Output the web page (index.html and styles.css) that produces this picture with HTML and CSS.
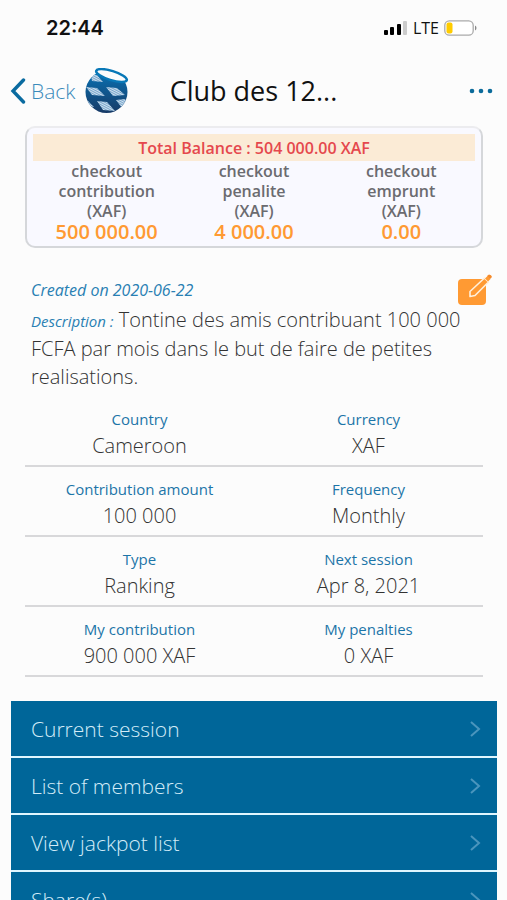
FILE: index.html
```html
<!DOCTYPE html>
<html lang="en">
<head>
<meta charset="utf-8">
<meta name="viewport" content="width=device-width, initial-scale=1">
<title>Club des 12</title>
<link rel="stylesheet" href="styles.css">
</head>
<body>
<div class="status">
  <span class="time">22:44</span>
  <div class="indicators">
    <svg width="24" height="16" viewBox="0 0 24 16" aria-hidden="true">
      <rect x="0" y="10" width="4" height="5" rx="1"/>
      <rect x="6" y="7" width="4" height="8" rx="1"/>
      <rect x="13" y="4" width="4" height="11" rx="1"/>
      <rect x="19" y="1" width="4" height="14" rx="1" fill="#ccc"/>
    </svg>
    <span class="network">LTE</span>
    <svg width="33" height="16" viewBox="0 0 33 16" aria-hidden="true">
      <rect x="0.8" y="0.8" width="28.4" height="14.4" rx="4.5" fill="#fff" stroke="#aaa" stroke-width="1.3"/>
      <rect x="2.5" y="2.5" width="6" height="11" rx="2" fill="#fc0"/>
      <path d="M31 5.5q1.5 .8 1.5 2.5t-1.5 2.5z" fill="#888"/>
    </svg>
  </div>
</div>
<header class="topbar">
  <a class="back" href="#">
    <svg width="16" height="26" viewBox="0 0 16 26" aria-hidden="true"><path d="M13.5 2 3 13l10.500 11" fill="none" stroke="#0a6ba0" stroke-width="3.400" stroke-linecap="round"/></svg>
    <span>Back</span>
  </a>
  <svg class="logo" width="46" height="46" viewBox="0 0 46 46" aria-hidden="true">
    <defs>
      <linearGradient id="globe" x1="0" y1="0" x2="0" y2="1"><stop offset="0" stop-color="#0873b5"/><stop offset="1" stop-color="#173a66"/></linearGradient>
      <pattern id="weave" width="2" height="2" patternUnits="userSpaceOnUse" patternTransform="rotate(28)"><rect width="2" height="2" fill="#cfe0ef"/><path d="M0 .4h2" stroke="#4383b5" stroke-width=".7"/></pattern>
      <clipPath id="disc"><circle cx="22.500" cy="24" r="21"/></clipPath>
    </defs>
    <circle cx="22.500" cy="24" r="21" fill="url(#globe)"/>
    <g clip-path="url(#disc)" fill="url(#weave)">
      <path d="M7 7l6 0 6 7-11-1z"/>
      <path d="M2 19l11 1 8 8-13-1z"/>
      <path d="M22 19l11 1 8 7-12 1z"/>
      <path d="M13 33l10 1 8 9-12-1z"/>
      <path d="M32 32l9-1 4 7-7 2z"/>
      <path d="M-1 31l5 2 6 6-7-1z"/>
    </g>
    <path d="M11 0H44V12L28 8 12 4z" fill="#fcfcfc"/>
    <ellipse cx="27.500" cy="7.500" rx="16" ry="4.600" transform="rotate(17 27.500 7.500)" fill="#fcfcfc" stroke="#0878b7" stroke-width="2.500"/>
  </svg>
  <h1>Club des 12...</h1>
  <button class="more" type="button" aria-label="More options">
    <svg width="24" height="6" viewBox="0 0 24 6" fill="#0b6b9b" aria-hidden="true"><circle cx="3" cy="3" r="2.300"/><circle cx="12" cy="3" r="2.300"/><circle cx="21" cy="3" r="2.300"/></svg>
  </button>
</header>
<main>
  <section class="balance">
    <h2>Total Balance : 504 000.00 XAF</h2>
    <div class="accounts">
      <div><p>checkout<br>contribution<br>(XAF)</p><strong>500 000.00</strong></div>
      <div><p>checkout<br>penalite<br>(XAF)</p><strong>4 000.00</strong></div>
      <div><p>checkout<br>emprunt<br>(XAF)</p><strong>0.00</strong></div>
    </div>
  </section>
  <section class="about">
    <div class="created">
      <em>Created on 2020-06-22</em>
      <button class="edit" type="button" aria-label="Edit">
        <svg width="34" height="32" viewBox="0 0 34 32" aria-hidden="true">
          <rect x="0" y="5" width="28" height="26" rx="4" fill="#ff9a33"/>
          <path d="M12 17.500 26.500 4l4 4L17 21.500l-5 1z" fill="#ff9a33" stroke="#fff0dc" stroke-width="1.600" stroke-linejoin="round"/>
          <path d="M27 4.500 29.500 2l3 3L30 7.500z" fill="#ff9a33"/>
          <path d="M31 .5q2.500 0 3 2.500l-2 2-3-3z" fill="#f58a2a"/>
        </svg>
      </button>
    </div>
    <p class="description"><em>Description :</em> Tontine des amis contribuant 100 000 FCFA par mois dans le but de faire de petites realisations.</p>
  </section>
  <dl class="facts">
    <div><dt>Country</dt><dd>Cameroon</dd></div>
    <div><dt>Currency</dt><dd>XAF</dd></div>
    <div><dt>Contribution amount</dt><dd>100 000</dd></div>
    <div><dt>Frequency</dt><dd>Monthly</dd></div>
    <div><dt>Type</dt><dd>Ranking</dd></div>
    <div><dt>Next session</dt><dd>Apr 8, 2021</dd></div>
    <div><dt>My contribution</dt><dd>900 000 XAF</dd></div>
    <div><dt>My penalties</dt><dd>0 XAF</dd></div>
  </dl>
  <nav class="menu">
    <a href="#">Current session <svg width="12" height="18" viewBox="0 0 12 18" aria-hidden="true"><path d="m2 2 8 7-8 7"/></svg></a>
    <a href="#">List of members <svg width="12" height="18" viewBox="0 0 12 18" aria-hidden="true"><path d="m2 2 8 7-8 7"/></svg></a>
    <a href="#">View jackpot list <svg width="12" height="18" viewBox="0 0 12 18" aria-hidden="true"><path d="m2 2 8 7-8 7"/></svg></a>
    <a href="#">Share(s) <svg width="12" height="18" viewBox="0 0 12 18" aria-hidden="true"><path d="m2 2 8 7-8 7"/></svg></a>
  </nav>
</main>
</body>
</html>
```
FILE: styles.css
```css
* {
  box-sizing: border-box;
}

body {
  margin: 0;
  height: 100vh;
  display: flex;
  flex-direction: column;
  overflow: hidden;
  background: #fcfcfc;
  color: #333;
  font-family: "Open Sans", sans-serif;
}

h1, h2, p, dl, dd {
  margin: 0;
}

a {
  text-decoration: none;
}

button {
  border: 0;
  padding: 0;
  background: none;
  display: flex;
}

.status {
  display: flex;
  justify-content: space-between;
  align-items: center;
  height: 56px;
  padding: 0 30px 0 46px;
  flex: none;
  color: #111;
}

.time {
  font-family: Inter, sans-serif;
  font-size: 20px;
  font-weight: 600;
}

.indicators {
  display: flex;
  align-items: center;
  gap: 5px;
}

.network {
  font-size: 16px;
  font-weight: 500;
}

.topbar {
  display: grid;
  grid-template-columns: 1fr auto 1fr;
  grid-template-areas: "left title right";
  align-items: center;
  height: 70px;
  padding: 0 10px;
  flex: none;
}

.back {
  grid-area: left;
  display: flex;
  align-items: center;
  gap: 5px;
  color: #3a8bbb;
  font-size: 21px;
  font-weight: 300;
}

.logo {
  grid-area: left;
  margin-left: 74px;
}

h1 {
  grid-area: title;
  color: #111;
  font-size: 27px;
  font-weight: 400;
  line-height: 36px;
}

.more {
  grid-area: right;
  justify-self: end;
  padding-right: 4px;
}

main {
  flex: 1;
  min-height: 0;
  overflow-y: auto;
  scrollbar-width: none;
}

.balance {
  margin: 0 24px 0 25px;
  padding: 6px 6px 4px;
  border: 2px solid #d5d7da;
  border-top-color: #ececef;
  border-radius: 10px;
  background: #f9f9ff;
  text-align: center;
}

.balance h2 {
  padding-top: 2px;
  background: #fbebd6;
  color: #e5484d;
  font-size: 16px;
  font-weight: 600;
  line-height: 25px;
}

.accounts {
  display: grid;
  grid-template-columns: repeat(3, 1fr);
}

.accounts p {
  color: #6b6b70;
  font-size: 16px;
  font-weight: 600;
  line-height: 20px;
}

.accounts strong {
  display: block;
  color: #ff9a33;
  font-size: 20px;
  font-weight: 600;
  line-height: 21px;
}

.about {
  padding: 26px 15px 0 31px;
}

.created {
  display: flex;
  justify-content: space-between;
  align-items: center;
}

.about em {
  color: #2980b3;
  font-size: 15px;
}

.created em {
  font-size: 16px;
}

.description {
  margin-right: 24px;
  font-size: 20px;
  font-weight: 300;
  line-height: 28px;
}

.description em {
  font-weight: 400;
}

.facts {
  display: grid;
  grid-template-columns: 1fr 1fr;
  margin: 6px 24px 0 25px;
  text-align: center;
}

.facts div {
  height: 70px;
  padding-top: 10px;
  border-bottom: 2px solid #d8d8da;
}

.facts dt {
  color: #1c75a8;
  font-size: 15px;
  line-height: 24px;
}

.facts dd {
  font-size: 20px;
  font-weight: 300;
  line-height: 30px;
}

.menu {
  display: grid;
  gap: 2px;
  margin: 24px 10px 0 11px;
  background: #dff6ff;
}

.menu a {
  display: flex;
  align-items: center;
  justify-content: space-between;
  height: 55px;
  padding: 0 16px 0 20px;
  background: #006699;
  color: #d3ecf8;
  font-size: 21px;
  font-weight: 300;
}

.menu path {
  fill: none;
  stroke: #4a95bd;
  stroke-width: 2;
}
```
